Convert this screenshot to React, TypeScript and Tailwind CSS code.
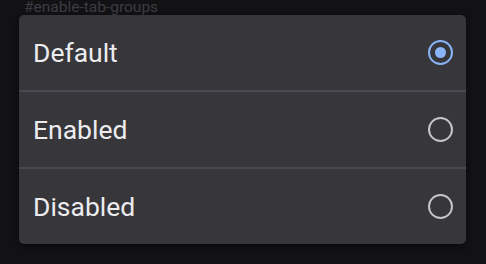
const options = [
  { label: "Default", checked: true },
  { label: "Enabled", checked: false },
  { label: "Disabled", checked: false },
]

const Radio = ({ checked }: { checked: boolean }) =>
  checked ? (
    <div className="size-[25px] rounded-full border-[2.5px] border-[#8ab4f8] flex items-center justify-center">
      <div className="size-[11px] rounded-full bg-[#8ab4f8]" />
    </div>
  ) : (
    <div className="size-[25px] rounded-full border-[2px] border-[#c4c4c8]" />
  )

export default function App() {
  return (
    <div className="w-[486px] h-[264px] overflow-hidden bg-[#121214] font-['Roboto',sans-serif]">
      <div className="h-[15px] pl-[24px] flex flex-col">
        <div className="-mt-[3px] text-[15.5px] leading-[20px] text-[#3d3d41]">#enable-tab-groups</div>
      </div>
      <div className="relative mx-[19px] w-[447px] rounded-[5px] bg-[#37363b] shadow-[0_2px_6px_rgba(0,0,0,0.5)]">
        {options.map((option, i) => (
          <div
            key={option.label}
            className={
              "flex items-center justify-between pl-[14px] pr-[13px] " +
              (i > 0 ? "border-t-2 border-[#4a494f] h-[77px]" : "h-[75px]")
            }
          >
            <span className="text-[26.5px] text-[#ececef]">{option.label}</span>
            <Radio checked={option.checked} />
          </div>
        ))}
      </div>
    </div>
  )
}
